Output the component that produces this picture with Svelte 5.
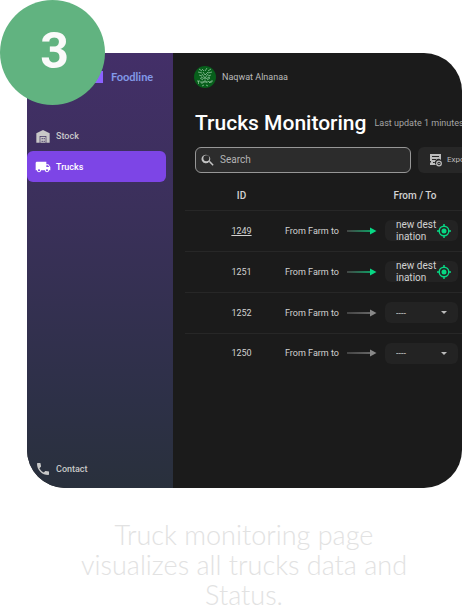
<script>
  let query = $state('');
  const trucks = [
    { id: 1249, destination: 'new destination', visited: true },
    { id: 1251, destination: 'new destination' },
    { id: 1252 },
    { id: 1250 },
  ];
</script>

<main>
  <span class="step">3</span>
  <section class="card">
    <nav>
      <div class="brand">
        <svg class="mark" viewBox="0 0 16 12"><path d="M0 0h16v12H0z" fill="#8c62ff" /></svg>
        <span>Foodline</span>
      </div>
      <a href="#stock">
        <svg viewBox="0 0 24 24"><path fill="currentColor" fill-rule="evenodd" d="M2 22V8L12 3l10 5v14h-5V12H7v10zM8 13h8v9H8zm2 2v2h1.500v-2zm3 0v2h1.500v-2zm-3 4v2h1.500v-2zm3 0v2h1.500v-2z" /></svg>
        Stock
      </a>
      <a href="#trucks" class="active">
        <svg viewBox="0 0 24 24"><path fill="currentColor" d="M20 8h-3V4H3c-1.100 0-2 .9-2 2v11h2c0 1.660 1.340 3 3 3s3-1.340 3-3h6c0 1.660 1.340 3 3 3s3-1.340 3-3h2v-5l-3-4zM6 18.500c-.83 0-1.500-.67-1.500-1.500s.67-1.500 1.500-1.500 1.500.67 1.500 1.500-.67 1.500-1.500 1.500zm13.500-9l1.960 2.500H17V9.500h2.500zm-1.500 9c-.83 0-1.500-.67-1.500-1.500s.67-1.500 1.500-1.500 1.500.67 1.500 1.500-.67 1.500-1.500 1.500z" /></svg>
        Trucks
      </a>
      <a href="#contact" class="contact">
        <svg viewBox="0 0 24 24"><path fill="currentColor" d="M6.620 10.790c1.440 2.830 3.760 5.140 6.590 6.590l2.200-2.200c.27-.27.67-.36 1.020-.24 1.120.37 2.330.57 3.570.57.55 0 1 .45 1 1V20c0 .55-.45 1-1 1-9.390 0-17-7.610-17-17 0-.55.45-1 1-1h3.500c.55 0 1 .45 1 1 0 1.250.2 2.450.57 3.570.11.35.03.74-.25 1.020l-2.200 2.200z" /></svg>
        Contact
      </a>
    </nav>

    <div class="content">
      <div class="user">
        <svg viewBox="0 0 22 22">
          <circle cx="11" cy="11" r="11" fill="#075f1b" />
          <g fill="none" stroke="#b9dfc2" stroke-width=".6">
            <path d="M5 3l3 2M4 6l4 1M5 9l3 1M8 3l2 2M17 3l-3 2M18 6l-4 1M17 9l-3 1M13 2l-2 3M9 6l2 3 3-3M8 8l3 4 3-4M7 11l4 2 5-2M6 12l3 2M16 12l-3 2" />
            <path d="M3 15h3M4.500 15v3M7 15v2h2v-2M10 17v-2h2v2M13 15v2M14 15l2 2v-2M17 17v-2h2M8 20l2-1M12 19l2 1" />
          </g>
        </svg>
        Naqwat Alnanaa
      </div>
      <header>
        <h1>Trucks Monitoring</h1>
        <span>Last update 1 minutes</span>
      </header>
      <div class="tools">
        <label class="search">
          <svg viewBox="0 0 24 24"><path fill="currentColor" d="M15.500 14h-.79l-.28-.27A6.500 6.500 0 1 0 13.730 14.710l.27.28v.79l5 4.990L20.490 19l-4.990-5zm-6 0a4.500 4.500 0 1 1 0-9 4.500 4.500 0 0 1 0 9z" /></svg>
          <input type="text" placeholder="Search" aria-label="Search" bind:value={query} />
        </label>
        <button class="export">
          <svg viewBox="0 0 14 14">
            <path fill="currentColor" fill-rule="evenodd" d="M1 1h11v6a3.500 3.500 0 0 0-5 5H1V9.500h1V8H1zM3 3v1h7V3zm0 3v1h4V6zm1 3v1h2V9z" />
            <circle cx="10" cy="10.500" r="2.300" fill="none" stroke="currentColor" stroke-width="1.300" />
            <circle cx="10" cy="10.500" r=".8" fill="currentColor" />
          </svg>
          Export
        </button>
      </div>
      <table>
        <thead>
          <tr><th class="id">ID</th><th>From / To</th></tr>
        </thead>
        <tbody>
          {#each trucks as truck}
            <tr>
              <td class="id" class:visited={truck.visited}>{truck.id}</td>
              <td>
                <div class="route" class:set={truck.destination}>
                  <span>From Farm to</span>
                  <svg class="arrow" viewBox="0 0 30 8">
                    <defs>
                      <linearGradient id="shaft-{truck.id}">
                        <stop offset="0" stop-color="#555" />
                        <stop offset="1" stop-color={truck.destination ? '#07d884' : '#888'} />
                      </linearGradient>
                    </defs>
                    <rect y="3.300" width="25" height="1.400" fill="url(#shaft-{truck.id})" />
                    <path d="M23 .5l6.500 3.500L23 7.500z" fill="currentColor" />
                  </svg>
                  {#if truck.destination}
                    <button class="destination">
                      <span>{truck.destination}</span>
                      <svg viewBox="0 0 14 14" fill="none" stroke="currentColor">
                        <circle cx="7" cy="7" r="4.800" stroke-width="1.400" />
                        <circle cx="7" cy="7" r="2.500" fill="currentColor" stroke="none" />
                        <path stroke-width="1.500" d="M7 0v2.500M7 11.500V14M0 7h2.500M11.500 7H14" />
                      </svg>
                    </button>
                  {:else}
                    <div class="picker">
                      <select aria-label="Destination of truck {truck.id}">
                        <option>----</option>
                      </select>
                      <svg viewBox="0 0 6 3"><path d="M0 0h6L3 3z" fill="currentColor" /></svg>
                    </div>
                  {/if}
                </div>
              </td>
            </tr>
          {/each}
        </tbody>
      </table>
    </div>
  </section>
  <p class="caption">Truck monitoring page visualizes all trucks data and Status.</p>
</main>

<style>
  :global(body) {
    margin: 0;
    background: #fff;
  }
  * {
    box-sizing: border-box;
  }
  main {
    position: relative;
    height: 100vh;
    overflow: hidden;
    padding: 53px 0 0 27px;
    font: 9px/12px Roboto, "Liberation Sans", sans-serif;
  }
  svg {
    flex: none;
    display: block;
  }
  button,
  input,
  select {
    font: inherit;
    color: inherit;
    border: 0;
    padding: 0;
    margin: 0;
    background: none;
  }
  .step {
    position: absolute;
    z-index: 1;
    top: 0;
    left: 0;
    width: 105px;
    height: 105px;
    padding-left: 4px;
    border-radius: 50%;
    background: #61b380;
    color: #fafafa;
    font: bold 50px/102px Roboto, sans-serif;
    text-align: center;
  }
  .card {
    display: flex;
    aspect-ratio: 1;
    overflow: hidden;
    border-radius: 38px;
    background: #1b1b1b;
    color: #d2d2d2;
  }
  nav {
    flex: none;
    width: 146px;
    display: flex;
    flex-direction: column;
    padding-bottom: 4px;
    background: linear-gradient(#432f68, #3b305b 35%, #2d3047 80%, #29303c);
  }
  .brand {
    display: flex;
    align-items: center;
    gap: 8px;
    height: 48px;
    padding-left: 60px;
    margin-bottom: 19px;
    color: #829ae9;
    font: bold 11px/12px Lato, sans-serif;
  }
  .mark {
    width: 16px;
    height: 12px;
  }
  nav a {
    display: flex;
    align-items: center;
    gap: 5px;
    height: 31px;
    margin-right: 7px;
    padding-left: 8px;
    border-radius: 6px;
    color: #c8c8c8;
    font-weight: 500;
    text-decoration: none;
  }
  nav a svg {
    width: 16px;
    height: 16px;
  }
  nav .active {
    background: #7d45e6;
    color: #fff;
  }
  nav .contact {
    margin-top: auto;
  }
  .content {
    flex: 1;
    min-width: 0;
    padding-top: 13px;
  }
  .user {
    display: flex;
    align-items: center;
    gap: 6px;
    padding-left: 21px;
    color: #bcbcbc;
  }
  .user svg {
    width: 22px;
    height: 22px;
  }
  header {
    display: flex;
    align-items: center;
    gap: 8px;
    margin-top: 21px;
    padding-left: 22px;
    color: #a5a5a5;
    white-space: nowrap;
  }
  h1 {
    margin: 0;
    color: #fff;
    font-size: 21px;
    line-height: 28px;
    font-weight: 500;
  }
  .tools {
    display: flex;
    gap: 7px;
    margin-top: 10px;
    padding-left: 22px;
  }
  .search {
    flex: none;
    display: flex;
    align-items: center;
    gap: 4px;
    width: 216px;
    height: 26px;
    padding-left: 4px;
    border: 1px solid #979797;
    border-radius: 6px;
    background: #2c2c2c;
    color: #c4c4c4;
    font-size: 10px;
  }
  .search svg {
    width: 16px;
    height: 16px;
  }
  input {
    flex: 1;
    min-width: 0;
    outline: none;
  }
  input::placeholder {
    color: #b4b4b4;
    opacity: 1;
  }
  .export {
    flex: none;
    display: flex;
    align-items: center;
    gap: 4px;
    width: 80px;
    padding-left: 11px;
    border-radius: 6px;
    background: #272727;
    color: #bcbcbc;
    font-size: 8px;
  }
  .export svg {
    width: 14px;
    height: 14px;
  }
  table {
    width: 365px;
    margin: 10px 0 0 12px;
    table-layout: fixed;
    border-collapse: collapse;
  }
  th,
  td {
    height: 41px;
    padding: 0;
    border-bottom: 1px solid #272727;
  }
  th {
    height: 27px;
    font-size: 10px;
    font-weight: 500;
  }
  tbody tr:last-child td {
    height: 40px;
    border: 0;
  }
  .id {
    width: 95px;
    padding-left: 18px;
    text-align: center;
  }
  .visited {
    text-decoration: underline;
  }
  .route {
    display: flex;
    align-items: center;
    padding-left: 5px;
    color: #d2d2d2;
  }
  .arrow {
    width: 30px;
    height: 8px;
    margin: 0 8px;
    color: #888;
  }
  .set svg {
    color: #07d884;
  }
  .destination,
  .picker {
    display: flex;
    align-items: center;
    width: 73px;
    height: 21px;
    padding: 0 7px 0 11px;
    border-radius: 6px;
    background: #232323;
  }
  .destination span {
    flex: 1;
    word-break: break-all;
    text-align: left;
    font-size: 10px;
  }
  .destination svg {
    width: 14px;
    height: 14px;
  }
  .picker {
    padding-right: 11px;
  }
  .picker svg {
    width: 6px;
    height: 3px;
    color: #bcbcbc;
  }
  select {
    flex: 1;
    min-width: 0;
    appearance: none;
  }
  .caption {
    width: 340px;
    max-width: 100%;
    margin: 32px auto 0 47px;
    color: #e2e2e2;
    font: 300 27px/30px "Century Gothic", Lato, sans-serif;
    text-align: center;
  }
</style>
